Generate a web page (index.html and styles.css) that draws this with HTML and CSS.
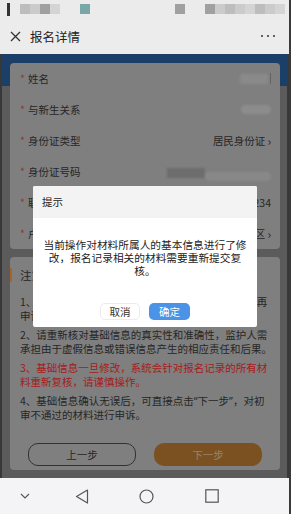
FILE: index.html
```html
<!DOCTYPE html>
<html lang="zh-CN">
<head>
  <meta charset="UTF-8">
  <title>报名详情</title>
  <link rel="stylesheet" href="styles.css">
</head>
<body>
  <div class="phone">
    <div class="statusbar">
      <div class="sb-left">
        <span class="sb-bar"></span>
        <span class="blk g1"></span><span class="blk g2"></span><span class="blk g3"></span><span class="blk g4"></span>
        <span class="blk teal"></span>
      </div>
      <div class="sb-right">
        <span class="blk g3"></span>
        <span class="sb-gap"></span>
        <span class="blk g3"></span><span class="blk g2"></span><span class="blk g1"></span><span class="blk g2"></span>
        <span class="blk g4"></span><span class="blk g1"></span><span class="blk g2"></span><span class="blk g4"></span>
      </div>
    </div>

    <div class="titlebar">
      <svg class="close" width="11" height="11" viewBox="0 0 11 11">
        <path d="M1 1 L10 10 M10 1 L1 10" stroke="#333" stroke-width="1.3" fill="none"/>
      </svg>
      <span class="title">报名详情</span>
      <span class="more"><i></i><i></i><i></i></span>
    </div>

    <div class="webview">
      <div class="page">
        <div class="card form">
          <div class="row"><span class="label"><b>*</b>姓名</span><span class="val"><span class="blur name"></span><span class="tick"></span></span></div>
          <div class="row"><span class="label"><b>*</b>与新生关系</span><span class="val"><span class="blur pill"></span></span></div>
          <div class="row"><span class="label"><b>*</b>身份证类型</span><span class="val">居民身份证 <em>›</em></span></div>
          <div class="row"><span class="label"><b>*</b>身份证号码</span><span class="val"><span class="blur idblk"></span><span class="blur idpill"></span></span></div>
          <div class="row"><span class="label"><b>*</b>联系电话</span><span class="val">13800001234</span></div>
          <div class="row"><span class="label"><b>*</b>户籍所在地</span><span class="val">广东省广州市天河区 <em>›</em></span></div>
        </div>

        <div class="card notice">
          <div class="notice-title">注意事项</div>
          <p>1、基础信息修改后，请仔细核对报名记录相关材料再申请。</p>
          <p>2、请重新核对基础信息的真实性和准确性，监护人需承担由于虚假信息或错误信息产生的相应责任和后果。</p>
          <p class="warn">3、基础信息一旦修改，系统会针对报名记录的所有材料重新复核，请谨慎操作。</p>
          <p>4、基础信息确认无误后，可直接点击<span class="q">“</span>下一步<span class="q">”</span>，对初审不通过的材料进行申诉。</p>
          <div class="actions">
            <button class="btn prev">上一步</button>
            <button class="btn next">下一步</button>
          </div>
        </div>
      </div>

      <div class="mask"></div>

      <div class="dialog">
        <div class="dialog-title">提示</div>
        <div class="dialog-body">当前操作对材料所属人的基本信息进行了修改，报名记录相关的材料需要重新提交复核。</div>
        <div class="dialog-btns">
          <button class="dbtn cancel">取消</button>
          <button class="dbtn ok">确定</button>
        </div>
      </div>
    </div>

    <div class="navbar">
      <svg width="10" height="6" viewBox="0 0 10 6" class="nav-down"><path d="M1 1 L5 5 L9 1" stroke="#555" stroke-width="1.1" fill="none"/></svg>
      <svg width="14" height="15" viewBox="0 0 14 15" class="nav-back"><path d="M12.5 1 L1.5 7.5 L12.5 14 Z" stroke="#555" stroke-width="1.2" fill="none" stroke-linejoin="round"/></svg>
      <svg width="15" height="15" viewBox="0 0 15 15" class="nav-home"><circle cx="7.5" cy="7.5" r="6.5" stroke="#555" stroke-width="1.2" fill="none"/></svg>
      <svg width="14" height="14" viewBox="0 0 14 14" class="nav-recent"><rect x="0.8" y="0.8" width="12.4" height="12.4" stroke="#555" stroke-width="1.2" fill="none"/></svg>
    </div>
  </div>
</body>
</html>
```

FILE: styles.css
```css
* {
  box-sizing: border-box;
}

body {
  margin: 0;
  background: #3a3a3a;
  font-family: "Noto Sans CJK SC", "Noto Sans", sans-serif;
}

.phone {
  width: 289px;
  height: 514px;
  display: flex;
  flex-direction: column;
  background: #ececec;
}

/* status bar (blurred icons) */
.statusbar {
  flex-shrink: 0;
  height: 18px;
  display: flex;
  justify-content: space-between;
  align-items: center;
  padding: 0 4px 0 7px;
  background: #ebebeb;
}

.sb-left,
.sb-right {
  display: flex;
  align-items: center;
}

.sb-bar {
  width: 3px;
  height: 13px;
  background: #333;
  margin-right: 10px;
}

.blk {
  width: 10px;
  height: 10px;
}

.g1 { background: #bdbdbd; }
.g2 { background: #cbcbcb; }
.g3 { background: #a0a0a0; }
.g4 { background: #d4d4d4; }

.teal {
  background: #79a6a6;
  margin-left: 20px;
}

.sb-gap {
  width: 20px;
}

/* title bar */
.titlebar {
  flex-shrink: 0;
  height: 36px;
  display: flex;
  align-items: center;
  padding: 0 14px 0 10px;
  background: #ececec;
}

.close {
  margin-right: 9px;
}

.title {
  flex: 1;
  font-size: 12.5px;
  color: #222;
}

.more {
  display: flex;
  gap: 4px;
}

.more i {
  width: 2px;
  height: 2px;
  background: #333;
  border-radius: 50%;
}

/* web content */
.webview {
  position: relative;
  flex: 1;
  min-height: 0;
  overflow: hidden;
  display: flex;
}

.page {
  flex: 1;
  border-left: 2px solid #565656;
  border-right: 2px solid #565656;
  background: linear-gradient(#2a629d 0 32px, #8d8d8d 32px);
  padding: 9px 7px 8px 8px;
}

.card {
  background: #c3c3c3;
  border-radius: 4px;
}

.form {
  padding: 0 9px 0 10px;
}

.row {
  height: 31px;
  display: flex;
  align-items: center;
  justify-content: space-between;
  font-size: 10.5px;
  color: #3b3b3b;
}

.label b {
  font-weight: normal;
  color: #d65a5a;
  margin-right: 3px;
}

.val {
  display: flex;
  align-items: center;
  white-space: nowrap;
}

.val em {
  font-style: normal;
  margin-left: 2px;
  font-size: 12px;
}

.blur {
  display: inline-block;
  filter: blur(1px);
}

.name {
  width: 28px;
  height: 10px;
  background: #d4d4d4;
}

.tick {
  width: 1px;
  height: 11px;
  background: #9a9a9a;
  margin-left: 2px;
}

.pill {
  width: 30px;
  height: 9px;
  border-radius: 5px;
  background: #d8d8d8;
}

.idblk {
  width: 38px;
  height: 10px;
  background: #a8a8a8;
  align-self: flex-start;
  margin-top: 6px;
}

.idpill {
  width: 66px;
  height: 9px;
  border-radius: 5px;
  background: #d2d2d2;
  margin-top: 10px;
}

.notice {
  margin-top: 8px;
  padding: 10px 7px 4px 10px;
}

.notice-title {
  position: relative;
  font-size: 11.5px;
  line-height: 17px;
  color: #3b3b3b;
  margin-bottom: 11px;
}

.notice-title::before {
  content: "";
  position: absolute;
  left: -10px;
  top: 1px;
  width: 2px;
  height: 14px;
  background: #ff9a3a;
}

.notice p {
  margin: 0 0 5px;
  font-size: 10.5px;
  line-height: 14px;
  color: #3b3b3b;
  text-spacing-trim: space-all;
}

.notice p.warn {
  color: #ff2d2d;
}

.q {
  font-family: "Noto Sans", sans-serif;
}

.actions {
  display: flex;
  gap: 18px;
  padding: 0 11px 0 8px;
  margin-top: 21px;
}

.btn {
  width: 108px;
  height: 23px;
  border-radius: 10px;
  font-family: inherit;
  font-size: 10.5px;
  padding: 0;
}

.prev {
  background: transparent;
  border: 1px solid #4e4e4e;
  color: #3b3b3b;
}

.next {
  background: #bd7d33;
  border: none;
  color: #e3c9a8;
}

.mask {
  position: absolute;
  inset: 0;
  background: rgba(0, 0, 0, 0.35);
}

/* dialog */
.dialog {
  position: absolute;
  left: 33px;
  top: 132px;
  width: 224px;
  height: 141px;
  background: #fff;
  border-radius: 2px;
  overflow: hidden;
}

.dialog-title {
  height: 32px;
  line-height: 32px;
  padding-left: 9px;
  font-size: 10.5px;
  color: #222;
  background: #f3f3f4;
}

.dialog-body {
  padding: 20px 9px 0;
  font-size: 10.7px;
  line-height: 13px;
  height: 59px;
  text-align: center;
  color: #222;
}

.dialog-btns {
  display: flex;
  justify-content: center;
  gap: 9px;
  margin-top: 26px;
}

.dbtn {
  height: 17px;
  border-radius: 5px;
  font-family: inherit;
  font-size: 10.5px;
  padding: 0;
}

.cancel {
  width: 40px;
  background: #fff;
  border: 1px solid #ececec;
  color: #333;
}

.ok {
  width: 41px;
  background: #4a93e6;
  border: none;
  color: #fff;
}

/* system nav bar */
.navbar {
  flex-shrink: 0;
  height: 36px;
  display: flex;
  align-items: center;
  background: #f4f4f6;
}

.nav-down {
  margin-left: 20px;
}

.nav-back {
  margin-left: 45px;
}

.nav-home {
  margin-left: 50px;
}

.nav-recent {
  margin-left: 51px;
}
```
